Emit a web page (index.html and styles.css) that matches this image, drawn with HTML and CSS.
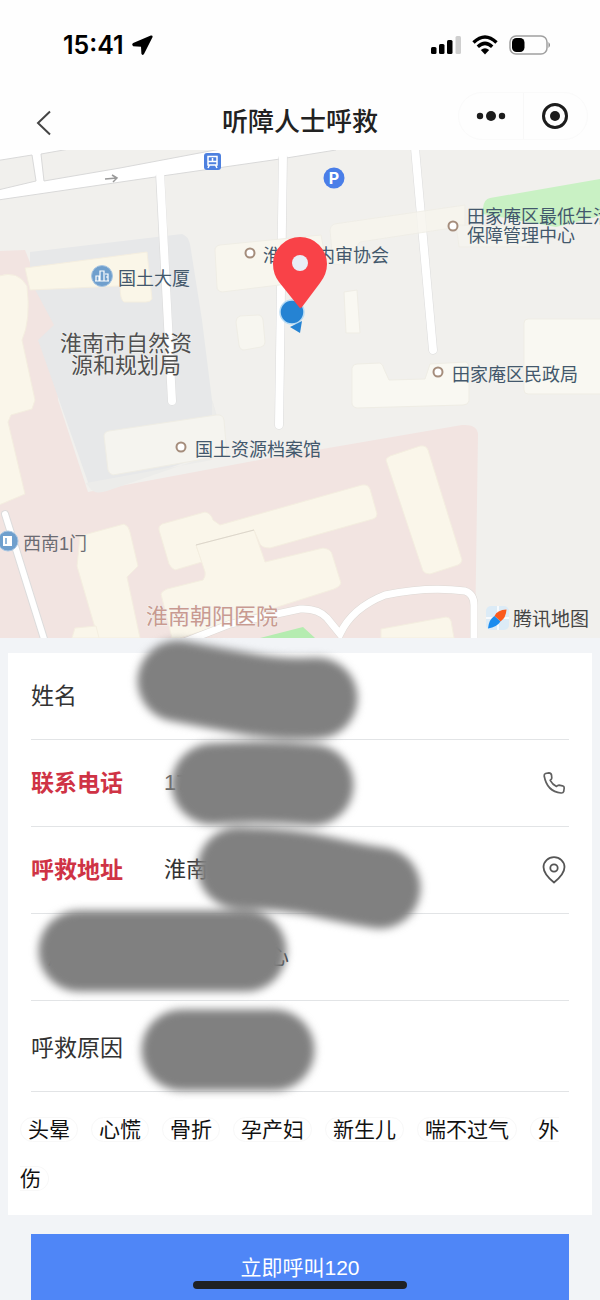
FILE: index.html
```html
<!DOCTYPE html>
<html lang="zh-CN">
<head>
<meta charset="utf-8">
<meta name="viewport" content="width=device-width, initial-scale=1">
<title>听障人士呼救</title>
<link rel="stylesheet" href="styles.css">
</head>
<body>
<div class="screen">
  <header class="top">
    <div class="status">
      <div class="status-left">
        <span class="clock">15:41</span>
        <svg width="21" height="20" viewBox="0 0 21 20" aria-hidden="true"><path d="M18.800 .6 1.200 8Q-.8 9.500 1.200 11.300L9 11.800 9.400 18.800Q10.300 21 12 19L20.600 2Q20.800 .1 18.800 .6Z"/></svg>
      </div>
      <div class="status-right">
        <svg width="30" height="20" viewBox="0 0 30 20" aria-hidden="true"><rect x="0" y="12" width="5.500" height="7" rx="1.500"/><rect x="8" y="9" width="5.500" height="10" rx="1.500"/><rect x="16" y="5" width="5.500" height="14" rx="1.500"/><rect x="24.500" y="1" width="5.500" height="18" rx="1.500" fill="#cfcfcf"/></svg>
        <svg width="26" height="20" viewBox="0 0 26 20" aria-hidden="true"><g fill="none" stroke="#000" stroke-width="3.400"><path d="M1.500 7.500Q13-3.500 24.500 7.500"/><path d="M5.800 11.800Q13 5 20.200 11.800"/></g><path d="M13 19.400 8.800 15Q13 11.600 17.200 15Z"/></svg>
        <svg width="42" height="20" viewBox="0 0 42 20" aria-hidden="true"><rect x="1" y="1" width="37" height="18" rx="6" fill="none" stroke="#a0a0a0" stroke-width="1.500"/><rect x="3" y="3" width="12.500" height="14" rx="4.500"/><path d="M39.500 7Q42.500 10 39.500 13Z" fill="#888"/></svg>
      </div>
    </div>
    <nav class="nav">
      <button class="back" type="button" aria-label="返回">
        <svg width="16" height="26" viewBox="0 0 16 26" aria-hidden="true"><path d="M14 1.500 2 13 14 24.500" fill="none" stroke="#444" stroke-width="2"/></svg>
      </button>
      <h1 class="title">听障人士呼救</h1>
      <div class="capsule">
        <button class="capsule-btn" type="button" aria-label="更多">
          <svg width="30" height="12" viewBox="0 0 30 12" aria-hidden="true"><circle cx="4" cy="6" r="3.200"/><circle cx="15" cy="6" r="5"/><circle cx="26" cy="6" r="3.200"/></svg>
        </button>
        <button class="capsule-btn" type="button" aria-label="关闭">
          <svg width="28" height="28" viewBox="0 0 28 28" aria-hidden="true"><circle cx="14" cy="14" r="11.500" fill="none" stroke="#1c1c1c" stroke-width="3"/><circle cx="14" cy="14" r="5"/></svg>
        </button>
      </div>
    </nav>
  </header>

  <svg class="map" viewBox="0 150 600 488" role="img" aria-label="地图">
    <rect y="150" width="600" height="488" fill="#f1f0ed"/>
    <path d="M0 251 25 250 35 275 55 325 58 400 88 492 270 458 462 425Q477 424 478 434L475 638H0Z" fill="#f2e4e1"/>
    <path d="M30 252 182 234Q188 236 190 244L202 320 212 400 226 448 104 491 90 488 38 340 54 325 30 280Z" fill="#e7e8e9"/>
    <path d="M212 400 226 450 107 491Q94 495 90 488L86 483 212 460Z" fill="#ececea"/>
    <g fill="#fff" stroke="#d9d9d9" stroke-width="1">
      <path d="M-2 160.500 32 155 36 181-2 190V200L155 177 280 159 336 150V148H226L120 168 44 181 41 154 75 148H-2Z"/>
    </g>
    <g fill="none" stroke-linecap="round">
      <g stroke="#dcdcdc" stroke-width="9"><path d="M160 177 172 401"/><path d="M283 158 279 425"/><path d="M415 148 433 350"/></g>
      <g stroke="#fff" stroke-width="8"><path d="M160 172 172 401"/><path d="M283 153 279 425"/><path d="M415 148 433 350"/></g>
    </g>
    <path d="M483 208Q484 199 490 198L600 179V216L556 227 483 214Z" fill="#c9f1c4"/>
    <g fill="#faf6ea" stroke="#f4eee0" stroke-width="1" stroke-linejoin="round">
      <path d="M-1 276Q18 270 27 286Q31 320 22 340L35 400 32 409 11 415 8 422 25 494-1 505Z"/>
      <path d="M25 268 147 252 152 299Q150 302 146 302L124 302Q120 300 120 286L30 290Z" fill="#faf6e8"/>
      <path d="M80 536 124 524Q129 526 130 532L138 566 127 577 140 638H98L77 566Z"/>
      <path d="M72 638 75 628 96 626 99 638Z"/>
      <path d="M159 530Q158 526 162 524L205 512Q211 513 213 520L220 525 362 485Q368 484 370 489L377 514Q377 518 373 519L270 548Q262 548 260 544L254 530 196 545 202 562 175 570Q171 568 169 564Z"/>
      <path d="M196 545 254 530 265 562 323 548Q331 549 332 554L341 583Q340 587 334 589L180 638H172L161 594Q162 591 167 589L203 580Q206 576 205 572Z"/>
      <path d="M386 460Q386 458 390 456L420 446Q426 445 428 450L462 560Q462 563 458 565L430 574Q425 574 423 571Z"/>
      <path d="M381 629 446 617Q450 617 451 621L454 638H381Z"/>
    </g>
    <path d="M196 545 254 530" stroke="#dcd6cb" stroke-width="1"/>
    <g fill="#f9f8f2" stroke="#efede5" stroke-width="1" stroke-linejoin="round">
      <path d="M104 436Q104 432 109 431L216 415Q223 414 224 420L227 455 113 475Q109 474 108 470Z" fill="#f5f4ef"/>
      <path d="M215 250Q215 246 220 245L321 235 325 256 320 280 222 292Q217 291 217 287Z" fill="#f8f6ee"/>
      <path d="M240 316 258 315Q262 315 263 320L265 342Q265 346 261 347L244 350Q240 350 239 345L236 322Q236 317 240 316Z" fill="#f7f6f0"/>
      <path d="M330 230Q330 226 334 224L465 205V226L360 242 342 265 333 264Z" fill="#f7f5ee" opacity=".85"/>
      <path d="M456 225 530 226V247H459Z" fill="#f5f4ef" opacity=".8"/>
      <path d="M344 292 357 290 360 333H346Z"/>
      <path d="M352 368Q353 364 357 364L380 363Q383 364 384 369L389 380 425 379 430 364 466 362Q469 363 469 368V401Q468 405 463 405L357 408Q352 407 352 403Z"/>
      <path d="M524 323Q524 319 528 319H602V394H528Q524 394 524 390Z"/>
    </g>
    <g fill="none" stroke-linecap="round">
      <path d="M5 514 45 642" stroke="#dcdcdc" stroke-width="8"/>
      <path d="M5 514 45 642" stroke="#fff" stroke-width="6"/>
      <path d="M184 642 230 624 300 609Q318 608 327 618L340 634Q352 608 385 595 428 586 465 591 474 594 474 605V642" stroke="#ddd9d5" stroke-width="8"/>
      <path d="M184 642 230 624 300 609Q318 608 327 618L340 634Q352 608 385 595 428 586 465 591 474 594 474 605V642" stroke="#fff" stroke-width="7"/>
    </g>
    <path d="M260 638 303 627 315 638Z" fill="#b5ecb0"/>
    <path d="M105 179 117 178M112 175 117 178 113 182" fill="none" stroke="#999" stroke-width="1.500"/>

    <g>
      <rect x="204" y="153" width="17" height="17" rx="3" fill="#4d80df"/>
      <path d="M208 156.500H217V165H208ZM208 161.500H217M212.500 158V161M209.500 165 208 168M215.500 165 217 168" fill="none" stroke="#fff" stroke-width="1.500"/>
      <circle cx="334" cy="178" r="10.500" fill="#4a7ee8"/>
      <text class="parking" x="334" y="184">P</text>
      <circle cx="102" cy="276" r="10.500" fill="#6f9fcd" stroke="#a9c6e2"/>
      <path d="M96 281V276H99V281M100 281V271H104V281M105 274H108V281M95 281H109M106 277H108" fill="none" stroke="#fff" stroke-width="1.200"/>
      <circle cx="8" cy="541" r="10" fill="#6f9fcd" stroke="#a9c6e2"/>
      <path d="M3 536H12V546H3Z" fill="#fff"/><path d="M6 538V544" stroke="#6f9fcd" stroke-width="1.500"/>
    </g>
    <g fill="#fff" stroke="#a58d7c" stroke-width="2">
      <circle cx="250" cy="253" r="4.500"/><circle cx="453" cy="226" r="4.500"/><circle cx="438" cy="372" r="4.500"/><circle cx="181" cy="447" r="4.500"/>
    </g>
    <g class="poi">
      <text x="263" y="262">淮南市内审协会</text>
      <text x="467" y="223">田家庵区最低生活</text>
      <text x="467" y="242">保障管理中心</text>
      <text x="118" y="285">国土大厦</text>
      <text x="452" y="381">田家庵区民政局</text>
      <text x="195" y="456">国土资源档案馆</text>
      <text class="gate" x="23" y="550">西南1门</text>
    </g>
    <g class="area">
      <text x="126" y="351">淮南市自然资</text>
      <text x="126" y="373">源和规划局</text>
      <text class="hospital" x="212" y="624">淮南朝阳医院</text>
    </g>
    <g>
      <circle cx="292" cy="312" r="12" fill="#2583d3" stroke="#b9dcf4" stroke-width="1.500"/>
      <path d="M290 327 302 321 300 333Z" fill="#2583d3"/>
      <path d="M299 307 279 282Q273 274 273 264A27 27 0 0 1 327 264Q327 274 320 283L302 307Q300 309 299 307Z" fill="#f94248"/>
      <circle cx="300" cy="263" r="8" fill="#e9eef6"/>
    </g>
    <g>
      <rect x="486" y="606" width="23" height="24" rx="5" fill="#dcebf6"/>
      <path d="M486 618H509M498 606V630" stroke="#fff" stroke-width="1.500"/>
      <path d="M506.500 609.500Q497 610 494.500 616L500.500 621.500Q506 618 506.500 609.500Z" fill="#fb5a1e"/>
      <path d="M488 628.500Q489 619 494.500 616L500.500 621.500Q497 627 488 628.500Z" fill="#1b8cee"/>
      <text class="brand" x="513" y="626">腾讯地图</text>
    </g>
  </svg>

  <main class="content">
    <form class="card">
      <div class="row"><label class="label" for="name">姓名</label><input class="field" id="name" type="text"></div>
      <div class="row"><label class="label required" for="phone">联系电话</label><input class="field muted" id="phone" type="tel" value="17">
        <svg width="24" height="24" viewBox="0 0 24 24" aria-hidden="true"><path d="M3.500 2.500 7 1.800Q9 1.800 9.500 4L9.800 7Q9.800 8.200 8.200 9.300 10.500 13.500 14.500 15.500 15.700 14.200 17 14.200L20.500 14.800Q22.300 15.300 22.200 17L21.700 20.500Q21.200 22.200 19 22 5 20.500 2.200 5 2 3 3.500 2.500Z" fill="none" stroke="#606060" stroke-width="1.700" stroke-linejoin="round"/></svg>
      </div>
      <div class="row"><label class="label required" for="address">呼救地址</label><input class="field" id="address" type="text" value="淮南">
        <svg width="24" height="28" viewBox="0 0 24 28" aria-hidden="true"><path d="M12 26.500Q1.500 18 1.500 11A10.500 9.800 0 0 1 22.500 11Q22.500 18 12 26.500Z" fill="none" stroke="#555" stroke-width="1.800" stroke-linejoin="round"/><circle cx="12" cy="12" r="3.700" fill="none" stroke="#555" stroke-width="1.800"/></svg>
      </div>
      <div class="row"><input class="field inset" type="text" aria-label="详细地址" value="淮　　　　　　　　　心"></div>
      <div class="row tall"><label class="label" for="reason">呼救原因</label><input class="field" id="reason" type="text"></div>
      <div class="chips"><a class="chip" href="#reason">头晕</a><a class="chip" href="#reason">心慌</a><a class="chip" href="#reason">骨折</a><a class="chip" href="#reason">孕产妇</a><a class="chip" href="#reason">新生儿</a><a class="chip" href="#reason">喘不过气</a><a class="chip" href="#reason">外伤</a></div>
      <svg class="masks" aria-hidden="true">
        <path d="M170 28Q205 35 240 41T309 45"/>
        <path d="M204 131Q255 127 305 132"/>
        <path d="M230 215Q280 216 315 224T372 235"/>
        <path d="M71 298H238"/>
        <path d="M174 397H266"/>
      </svg>
    </form>
    <button class="call" type="button">立即呼叫120</button>
  </main>
  <div class="home-bar"></div>
</div>
</body>
</html>
```

FILE: styles.css
```css
* { box-sizing: border-box; }
body {
  margin: 0;
  background: #f2f4f7;
  color: #333;
  font-family: "Liberation Sans", "Noto Sans CJK SC", sans-serif;
}
button { border: 0; padding: 0; background: none; font: inherit; }
svg { display: block; flex: none; }
.screen {
  position: relative;
  min-height: 100vh;
  display: flex;
  flex-direction: column;
  overflow: hidden;
}
.top { background: #fefefe; }
.status {
  height: 90px;
  display: flex;
  align-items: center;
  justify-content: space-between;
  padding: 0 49px 0 63px;
}
.status-left { display: flex; align-items: center; gap: 8px; }
.status-right { display: flex; align-items: center; gap: 11px; }
.clock {
  font: 600 25px/30px Inter, sans-serif;
  color: #000;
}
.nav {
  height: 60px;
  display: grid;
  grid-template-columns: 1fr auto 1fr;
  align-items: center;
  padding: 0 12px 0 36px;
}
.back { justify-self: start; padding-top: 6px; }
.title {
  margin: 0;
  padding: 4px 24px 0 0;
  font-size: 26px;
  line-height: 40px;
  font-weight: 500;
  color: #222;
}
.capsule {
  justify-self: end;
  align-self: start;
  display: flex;
  width: 130px;
  height: 48px;
  margin-top: 2px;
  border: 1px solid #fafafa;
  border-radius: 24px;
  fill: #1c1c1c;
}
.capsule-btn { flex: 1; display: grid; place-items: center; }
.capsule-btn + .capsule-btn { border-left: 1px solid #f8f8f8; }
.map { width: 100%; }
.parking { font: 700 16px Inter, sans-serif; fill: #fff; text-anchor: middle; }
.poi {
  font-size: 18px;
  fill: #43586c;
}
.gate { fill: #6b6b72; }
.area {
  font-size: 22px;
  fill: #505050;
  stroke: #f4f4f2;
  stroke-width: 1px;
  paint-order: stroke;
  text-anchor: middle;
}
.hospital { fill: #c99a90; }
.brand { font-size: 19px; fill: #444; }
.content {
  flex: 1;
  display: flex;
  flex-direction: column;
  padding: 15px 8px 0;
}
.card { position: relative; background: #fff; }
.row {
  height: 87px;
  margin: 0 23px;
  padding-right: 3px;
  display: flex;
  align-items: center;
  border-bottom: 1px solid #e2e4e6;
}
.tall { height: 91px; padding-top: 4px; }
.label { width: 133px; font-size: 23px; line-height: 34px; }
.required { color: #cf3345; font-weight: 700; }
.field {
  flex: 1;
  min-width: 0;
  border: 0;
  padding: 0;
  background: transparent;
  font: inherit;
  font-size: 22px;
  line-height: 34px;
  color: #333;
}
.muted { color: #666; }
.inset { padding-left: 16px; }
.chips {
  padding: 13px 12px 12px;
  font-size: 21px;
  line-height: 49px;
}
.chip {
  margin-right: 13px;
  padding: 0 7px;
  border: 1px solid #f8f8f8;
  border-radius: 14px;
  color: #111;
  text-decoration: none;
}
.masks {
  position: absolute;
  inset: 0;
  width: 100%;
  height: 100%;
  overflow: visible;
  pointer-events: none;
  fill: none;
  stroke: #808080;
  stroke-width: 81px;
  stroke-linecap: round;
  filter: blur(4px);
}
.call {
  flex: 1;
  min-height: 67px;
  margin: 19px 23px 0;
  background: #4f86f7;
  color: #fff;
  font-size: 21px;
  line-height: 32px;
}
.home-bar {
  position: absolute;
  left: 50%;
  bottom: 12px;
  width: 214px;
  height: 8px;
  margin-left: -107px;
  border-radius: 4px;
  background: #1f2124;
}
```
